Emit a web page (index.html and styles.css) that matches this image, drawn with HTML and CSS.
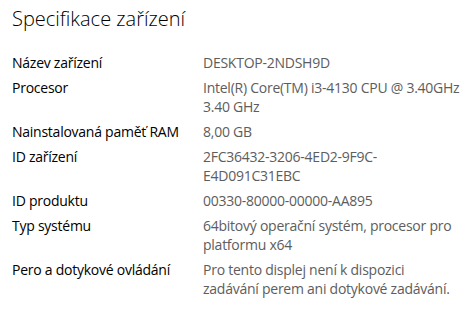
FILE: index.html
```html
<!DOCTYPE html>
<html lang="cs">
<head>
<meta charset="utf-8">
<link rel="stylesheet" href="styles.css">
</head>
<body>
<div class="page">
  <h1 class="title">Specifikace zařízení</h1>
  <dl class="specs">
    <dt>Název zařízení</dt>
    <dd>DESKTOP-2NDSH9D</dd>
    <dt>Procesor</dt>
    <dd>Intel(R) Core(TM) i3-4130 CPU @ 3.40GHz<br>3.40 GHz</dd>
    <dt>Nainstalovaná paměť RAM</dt>
    <dd>8,00 GB</dd>
    <dt>ID zařízení</dt>
    <dd>2FC36432-3206-4ED2-9F9C-<br>E4D091C31EBC</dd>
    <dt>ID produktu</dt>
    <dd>00330-80000-00000-AA895</dd>
    <dt>Typ systému</dt>
    <dd>64bitový operační systém, procesor pro<br>platformu x64</dd>
    <dt>Pero a dotykové ovládání</dt>
    <dd>Pro tento displej není k dispozici<br>zadávání perem ani dotykové zadávání.</dd>
  </dl>
</div>
</body>
</html>
```
FILE: styles.css
```css
html, body {
  margin: 0;
  padding: 0;
  background: #ffffff;
}
.page {
  padding: 5px 12px 0 12px;
  font-family: "Open Sans", "Noto Sans", "Liberation Sans", sans-serif;
}
.title {
  margin: 0 0 20px 0;
  font-size: 20px;
  font-weight: 300;
  line-height: 28px;
  color: #000000;
}
.specs {
  margin: 0;
  display: grid;
  grid-template-columns: 191px 1fr;
  row-gap: 6px;
  font-size: 14px;
  line-height: 19px;
  letter-spacing: -0.25px;
}
.specs dt {
  color: #000000;
}
.specs dd {
  margin: 0;
  color: #5d5d5d;
  white-space: nowrap;
}
```
